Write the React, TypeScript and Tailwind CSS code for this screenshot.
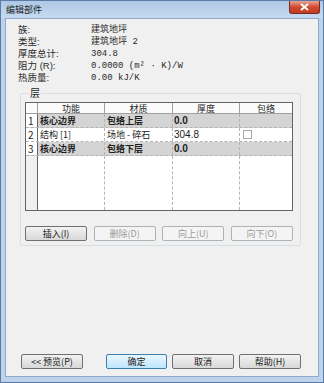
const font = { fontFamily: '"Noto Sans CJK SC", "Liberation Sans", sans-serif' };

const info = [
  ["族:", "建筑地坪"],
  ["类型:", "建筑地坪 2"],
  ["厚度总计:", "304.8"],
  ["阻力 (R):", "0.0000 (m² · K)/W"],
  ["热质量:", "0.00 kJ/K"],
];

const rows = [
  { n: "1", fn: "核心边界", mat: "包络上层", th: "0.0", core: true },
  { n: "2", fn: "结构 [1]", mat: "场地 - 碎石", th: "304.8", core: false },
  { n: "3", fn: "核心边界", mat: "包络下层", th: "0.0", core: true },
];

function Btn({ label, disabled, primary, w }: { label: string; disabled?: boolean; primary?: boolean; w: string }) {
  const base = "h-[15px] flex items-center justify-center text-[9px] leading-none rounded-[2px] border";
  const look = disabled
    ? "border-[#adb2b5] bg-[#f4f4f4] text-[#9a9a9a]"
    : primary
    ? "border-[#3c7fb1] bg-gradient-to-b from-[#eaf6fd] to-[#bee6fd] text-[#1a1a1a]"
    : "border-[#707070] bg-gradient-to-b from-[#f2f2f2] to-[#d8d8d8] text-[#1a1a1a]";
  return <div className={`${base} ${look} ${w}`}>{label}</div>;
}

export default function App() {
  return (
    <div className="w-[324px] h-[383px] bg-[#bdd3ec] border border-[#5b7ba6] flex flex-col" style={font}>
      {/* Title bar */}
      <div className="h-[17px] flex items-start justify-between bg-gradient-to-b from-[#aec8e6] to-[#c6dbf1]">
        <span className="text-[9px] leading-none text-[#1e1e1e] pl-[5px] pt-[4px]">编辑部件</span>
        <div className="w-[31px] h-[13px] mr-[3px] rounded-b-[3px] border border-t-0 border-[#7a2a1e] bg-gradient-to-b from-[#e8a494] via-[#cf4a30] to-[#c43b23] flex items-center justify-center">
          <svg width="9" height="8" viewBox="0 0 9 8">
            <path d="M1 1 L8 7 M8 1 L1 7" stroke="#fff" strokeWidth="2" />
          </svg>
        </div>
      </div>

      {/* Client area */}
      <div className="mx-[4px] h-[359px] bg-[#f0f0f0] border border-[#8fa9cc] flex flex-col">
        <div className="pl-[12px] pt-[5px] text-[9.5px] text-[#2a2a2a] font-['Liberation_Sans','Noto_Sans_CJK_SC',sans-serif]">
          {info.map(([k, v]) => (
            <div key={k} className="h-[12px] flex items-center leading-[12px] overflow-hidden">
              <span className="w-[73px]">{k}</span>
              <span className="font-['Liberation_Mono','Noto_Sans_CJK_SC',monospace] text-[9px]">{v}</span>
            </div>
          ))}
        </div>

        <fieldset className="mt-[3px] ml-[14px] w-[281px] border border-[#d5dfe5] rounded-[2px] pl-[4px] pr-[7px] pb-[4px]">
          <legend className="ml-[4px] px-[1px] text-[10px] leading-[12px] text-[#1e1e1e]">层</legend>

          {/* Table */}
          <div className="mt-[3px] w-[268px] h-[109px] border border-[#646464] bg-white flex flex-col text-[9px] leading-none text-[#1e1e1e]">
            <div className="h-[11px] flex border-b border-[#a0a0a0] bg-[#fbfbfb]">
              <div className="w-[12px] border-r border-[#a0a0a0]" />
              {["功能", "材质", "厚度", "包络"].map((h, i) => (
                <div
                  key={h}
                  className={`${["w-[67px]", "w-[68px]", "w-[67px]", "flex-1"][i]} flex items-center justify-center ${i < 3 ? "border-r border-[#a0a0a0]" : ""}`}
                >
                  {h}
                </div>
              ))}
            </div>
            {rows.map((r) => (
              <div key={r.n} className={`h-[14px] flex border-b border-dashed border-[#b4b4b4] ${r.core ? "bg-[#d4d4d4] font-bold" : "bg-white"}`}>
                <div className="w-[12px] bg-white border-r border-[#646464] flex items-center pl-[2px] font-normal text-[10px]">{r.n}</div>
                <div className="w-[67px] border-r border-dashed border-[#b4b4b4] flex items-center pl-[2px]">{r.fn}</div>
                <div className="w-[68px] border-r border-dashed border-[#b4b4b4] flex items-center pl-[2px]">{r.mat}</div>
                <div className="w-[67px] border-r border-dashed border-[#b4b4b4] flex items-center pl-[1px] font-['Liberation_Sans',sans-serif] text-[10px]">{r.th}</div>
                <div className="flex-1 flex items-center pl-[3px]">
                  {!r.core && <div className="w-[9px] h-[9px] border border-[#a8a8a8] bg-white" />}
                </div>
              </div>
            ))}
            <div className="flex-1 flex">
              <div className="w-[12px] bg-[#f0f0f0] border-r border-[#646464]" />
              <div className="w-[67px] border-r border-dashed border-[#b4b4b4]" />
              <div className="w-[68px] border-r border-dashed border-[#b4b4b4]" />
              <div className="w-[67px] border-r border-dashed border-[#b4b4b4]" />
              <div className="flex-1" />
            </div>
          </div>

          <div className="mt-[15px] w-[268px] flex justify-between">
            <Btn label="插入(I)" w="w-[62px]" />
            <Btn label="删除(D)" w="w-[62px]" disabled />
            <Btn label="向上(U)" w="w-[62px]" disabled />
            <Btn label="向下(O)" w="w-[62px]" disabled />
          </div>
        </fieldset>

        <div className="mt-auto mb-[7px] ml-[15px] flex">
          <Btn label="<< 预览(P)" w="w-[62px]" />
          <div className="ml-[23px] flex gap-[5px]">
            <Btn label="确定" w="w-[61px]" primary />
            <Btn label="取消" w="w-[62px]" />
            <Btn label="帮助(H)" w="w-[62px]" />
          </div>
        </div>
      </div>
    </div>
  );
}
